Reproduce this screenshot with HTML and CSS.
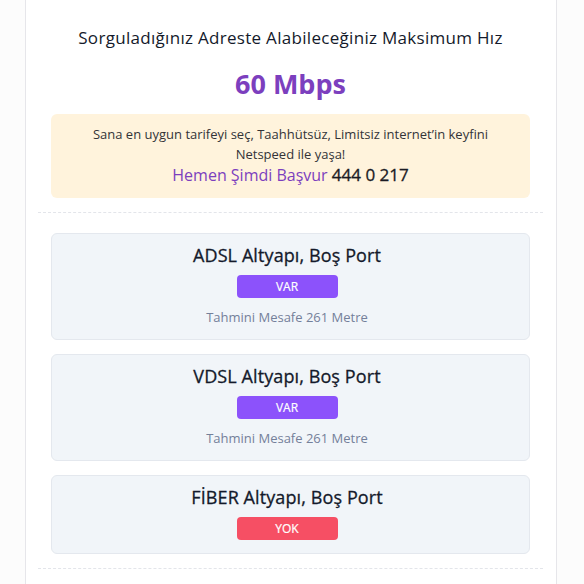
FILE: index.html
```html
<!DOCTYPE html>
<html lang="tr">
<head>
<meta charset="utf-8">
<link rel="stylesheet" href="styles.css">
</head>
<body>
<div class="panel">
  <h2 class="heading">Sorguladığınız Adreste Alabileceğiniz Maksimum Hız</h2>
  <div class="speed">60 Mbps</div>
  <div class="promo">
    <p class="promo-text">Sana en uygun tarifeyi seç, Taahhütsüz, Limitsiz internet’in keyfini Netspeed ile yaşa!</p>
    <p class="promo-cta"><span class="cta-link">Hemen Şimdi Başvur</span> <span class="cta-phone">444 0 217</span></p>
  </div>
  <div class="divider"></div>
  <div class="cards">
    <div class="card">
      <div class="card-title">ADSL Altyapı, Boş Port</div>
      <div class="badge badge-yes">VAR</div>
      <div class="distance">Tahmini Mesafe 261 Metre</div>
    </div>
    <div class="card">
      <div class="card-title">VDSL Altyapı, Boş Port</div>
      <div class="badge badge-yes">VAR</div>
      <div class="distance">Tahmini Mesafe 261 Metre</div>
    </div>
    <div class="card">
      <div class="card-title">FİBER Altyapı, Boş Port</div>
      <div class="badge badge-no">YOK</div>
    </div>
  </div>
  <div class="divider divider-bottom"></div>
</div>
</body>
</html>
```
FILE: styles.css
```css
* { box-sizing: border-box; }
html, body { margin: 0; padding: 0; }
body {
  background: #fcfcfc;
  font-family: "Open Sans", "Noto Sans", sans-serif;
  color: #111827;
}
.panel {
  margin-left: 25px;
  width: 532px;
  min-height: 584px;
  background: #ffffff;
  border-left: 1px solid #e6e6ea;
  border-right: 1px solid #e6e6ea;
  padding: 26px 13px 0 12px;
}
.heading {
  margin: 0;
  font-size: 17px;
  line-height: 24px;
  font-weight: 400;
  letter-spacing: 0.3px;
  text-align: center;
  color: #141a2b;
}
.speed {
  margin-top: 16px;
  font-size: 27px;
  line-height: 36px;
  font-weight: 700;
  text-align: center;
  color: #7c3fbe;
}
.promo {
  margin: 12px 13px 0 13px;
  background: #fff3dc;
  border-radius: 6px;
  padding: 10px 16px 12px;
  text-align: center;
}
.promo-text {
  margin: 0;
  font-size: 13px;
  line-height: 20px;
  color: #333338;
}
.promo-cta {
  margin: 0;
  font-size: 16px;
  line-height: 22px;
}
.cta-link { color: #7c3fbe; }
.cta-phone {
  color: #1b1b24;
  font-size: 17px;
  font-weight: 500;
  -webkit-text-stroke: 0.3px #1b1b24;
}
.divider {
  margin-top: 14px;
  border-top: 1px dashed #e3e5ea;
}
.cards {
  margin: 20px 13px 0 13px;
  display: flex;
  flex-direction: column;
  gap: 14px;
}
.card {
  background: #f1f5f9;
  border: 1px solid #e4e8ee;
  border-radius: 6px;
  padding: 8px 7px 13px 0;
  display: flex;
  flex-direction: column;
  align-items: center;
}
.card-title {
  font-size: 18px;
  line-height: 26px;
  font-weight: 500;
  letter-spacing: 0.1px;
  color: #141a2b;
  -webkit-text-stroke: 0.3px #141a2b;
}
.badge {
  margin-top: 7px;
  width: 101px;
  height: 23px;
  border-radius: 4px;
  color: #ffffff;
  font-size: 12px;
  font-weight: 500;
  line-height: 23px;
  text-align: center;
  -webkit-text-stroke: 0.2px #ffffff;
}
.badge-yes { background: #8c52fb; }
.badge-no { background: #f64f64; }
.distance {
  margin-top: 11px;
  font-size: 13px;
  line-height: 17px;
  color: #74809a;
}
.divider-bottom { margin-top: 14px; }
```
